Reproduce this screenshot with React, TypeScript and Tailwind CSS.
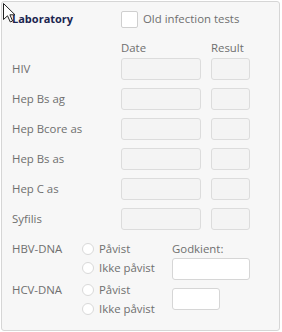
const rows = ["HIV", "Hep Bs ag", "Hep Bcore as", "Hep Bs as", "Hep C as", "Syfilis"];

function Radio({ label }: { label: string }) {
  return (
    <div className="flex h-[19px] items-center gap-[5px]">
      <span className="h-[12px] w-[12px] rounded-full border border-[#d9d9d9] bg-white" />
      <span>{label}</span>
    </div>
  );
}

function Cursor() {
  return (
    <svg className="pointer-events-none absolute left-[3px] top-[3px]" width="13" height="20" viewBox="0 0 13 20">
      <path
        d="M0.5 0.5 L0.5 16.5 L4.5 12.8 L7.3 19 L9.6 18 L6.9 11.8 L12 11.8 Z"
        fill="white"
        stroke="#222"
        strokeWidth="1"
        strokeLinejoin="round"
      />
    </svg>
  );
}

export default function App() {
  return (
    <div
      className="relative h-[332px] w-[282px] bg-white p-px text-[11.4px] text-[#6f6f6f]"
      style={{ fontFamily: '"Open Sans", "Noto Sans", sans-serif' }}
    >
      <div className="h-[330px] w-[279px] rounded-[3px] border border-[#d6d6d6] bg-[#f7f7f7] pl-[10px] pt-[8px]">
        <div className="flex h-[18px] items-center">
          <span className="w-[109px] text-[11px] font-bold text-[#1b2550]">Laboratory</span>
          <span className="h-[17px] w-[17px] rounded-[2px] border border-[#cfcfcf] bg-white" />
          <span className="ml-[5px]">Old infection tests</span>
        </div>

        <div className="mt-[12px] flex h-[16px] items-center">
          <span className="ml-[109px] w-[90px]">Date</span>
          <span>Result</span>
        </div>

        <div className="mt-[2px] flex flex-col gap-[8px]">
          {rows.map((r) => (
            <div key={r} className="flex h-[22px] items-center">
              <span className="w-[109px]">{r}</span>
              <span className="h-[22px] w-[80px] rounded-[3px] border border-[#dcdcdc] bg-[#f4f4f4]" />
              <span className="ml-[10px] h-[22px] w-[39px] rounded-[3px] border border-[#dcdcdc] bg-[#f4f4f4]" />
            </div>
          ))}
        </div>

        <div className="mt-[9px] flex h-[41px]">
          <span className="flex h-[19px] w-[70px] items-center">HBV-DNA</span>
          <div className="w-[90px]">
            <Radio label="Påvist" />
            <Radio label="Ikke påvist" />
          </div>
          <div>
            <div className="flex h-[19px] items-center">Godkient:</div>
            <span className="block h-[22px] w-[78px] rounded-[3px] border border-[#d6d6d6] bg-white" />
          </div>
        </div>

        <div className="flex">
          <span className="flex h-[19px] w-[70px] items-center">HCV-DNA</span>
          <div className="w-[90px]">
            <Radio label="Påvist" />
            <Radio label="Ikke påvist" />
          </div>
          <div className="flex items-center">
            <span className="block h-[22px] w-[48px] rounded-[3px] border border-[#d6d6d6] bg-white" />
          </div>
        </div>
      </div>
      <Cursor />
    </div>
  );
}
